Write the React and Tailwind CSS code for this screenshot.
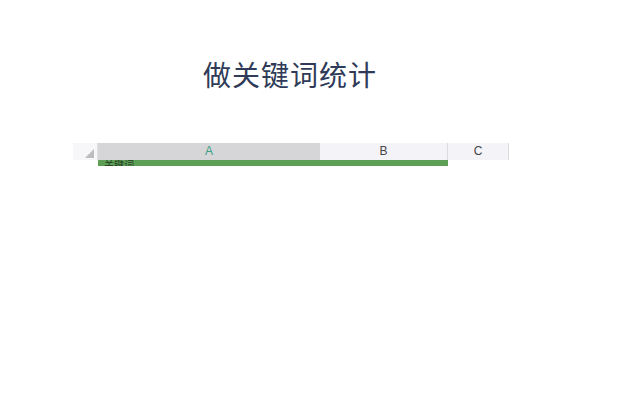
export default function App() {
  return (
    <div className="w-[640px] h-[409px] bg-white overflow-hidden" style={{ fontFamily: '"Liberation Sans", "Noto Sans CJK SC", sans-serif' }}>
      <div className="pt-[58px] pl-[203px]">
        <h1 className="text-[28px] leading-[32px] font-normal text-[#2f3b58] tracking-[1px]" style={{ fontFamily: '"Noto Sans CJK SC", sans-serif' }}>
          做关键词统计
        </h1>
      </div>

      {/* spreadsheet header, cut off below */}
      <div className="mt-[53px] ml-[73px] h-[23px] overflow-hidden w-[437px]">
        <div className="flex h-[17px] text-[12px] leading-[17px]">
          <div className="w-[25px] bg-[#f7f7f9] border-r border-[#e0e0e0] flex items-end justify-end pr-[3px] pb-[2px]">
            <div className="w-0 h-0 border-l-[9px] border-l-transparent border-b-[9px] border-b-[#bcbcbc]" />
          </div>
          <div className="w-[222px] bg-[#d6d6d8] text-[#3a9f83] text-center">A</div>
          <div className="w-[128px] bg-[#f4f4f8] text-[#444] text-center border-r border-[#dcdcdc]">B</div>
          <div className="w-[61px] bg-[#f4f4f8] text-[#444] text-center border-r border-[#dcdcdc]">C</div>
        </div>
        <div className="flex h-[6px]">
          <div className="w-[25px] bg-white" />
          <div className="w-[350px] bg-[#5e9f56] text-[10px] leading-[12px] text-[#1e3a1e] pl-[6px]">关键词</div>
          <div className="w-[61px] bg-white" />
        </div>
      </div>
    </div>
  );
}
